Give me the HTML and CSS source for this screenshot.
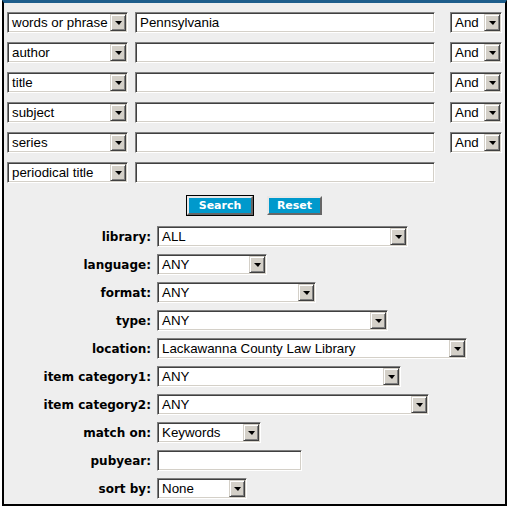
FILE: index.html
```html
<!DOCTYPE html>
<html lang="en">
<head>
    <meta charset="UTF-8">
    <meta name="viewport" content="width=device-width, initial-scale=1.0">
    <title>Advanced Search</title>
    <link rel="stylesheet" href="styles.css">
</head>
<body>
    <div class="search-box">
        <!-- keyword rows -->
        <div class="terms">
            <div class="term-row">
                <div class="select term-field"><span class="value">words or phrase</span><span class="arrow"></span></div>
                <div class="text term-text">Pennsylvania</div>
                <div class="select term-bool"><span class="value">And</span><span class="arrow"></span></div>
            </div>
            <div class="term-row">
                <div class="select term-field"><span class="value">author</span><span class="arrow"></span></div>
                <div class="text term-text"></div>
                <div class="select term-bool"><span class="value">And</span><span class="arrow"></span></div>
            </div>
            <div class="term-row">
                <div class="select term-field"><span class="value">title</span><span class="arrow"></span></div>
                <div class="text term-text"></div>
                <div class="select term-bool"><span class="value">And</span><span class="arrow"></span></div>
            </div>
            <div class="term-row">
                <div class="select term-field"><span class="value">subject</span><span class="arrow"></span></div>
                <div class="text term-text"></div>
                <div class="select term-bool"><span class="value">And</span><span class="arrow"></span></div>
            </div>
            <div class="term-row">
                <div class="select term-field"><span class="value">series</span><span class="arrow"></span></div>
                <div class="text term-text"></div>
                <div class="select term-bool"><span class="value">And</span><span class="arrow"></span></div>
            </div>
            <div class="term-row">
                <div class="select term-field"><span class="value">periodical title</span><span class="arrow"></span></div>
                <div class="text term-text"></div>
            </div>
        </div>

        <div class="buttons">
            <button class="btn btn-default">Search</button>
            <button class="btn">Reset</button>
        </div>

        <!-- limits -->
        <div class="limits">
            <div class="limit-row">
                <label>library:</label>
                <div class="select w-library"><span class="value">ALL</span><span class="arrow"></span></div>
            </div>
            <div class="limit-row">
                <label>language:</label>
                <div class="select w-language"><span class="value">ANY</span><span class="arrow"></span></div>
            </div>
            <div class="limit-row">
                <label>format:</label>
                <div class="select w-format"><span class="value">ANY</span><span class="arrow"></span></div>
            </div>
            <div class="limit-row">
                <label>type:</label>
                <div class="select w-type"><span class="value">ANY</span><span class="arrow"></span></div>
            </div>
            <div class="limit-row">
                <label>location:</label>
                <div class="select w-location"><span class="value">Lackawanna County Law Library</span><span class="arrow"></span></div>
            </div>
            <div class="limit-row">
                <label>item category1:</label>
                <div class="select w-cat1"><span class="value">ANY</span><span class="arrow"></span></div>
            </div>
            <div class="limit-row">
                <label>item category2:</label>
                <div class="select w-cat2"><span class="value">ANY</span><span class="arrow"></span></div>
            </div>
            <div class="limit-row">
                <label>match on:</label>
                <div class="select w-match"><span class="value">Keywords</span><span class="arrow"></span></div>
            </div>
            <div class="limit-row">
                <label>pubyear:</label>
                <div class="text w-pubyear"></div>
            </div>
            <div class="limit-row">
                <label>sort by:</label>
                <div class="select w-sort"><span class="value">None</span><span class="arrow"></span></div>
            </div>
        </div>
    </div>
</body>
</html>
```

FILE: styles.css
```css
body {
    margin: 0;
    font-family: "Liberation Sans", Arial, sans-serif;
    background-color: #fff;
}

.search-box {
    margin-left: 2px;
    width: 501px;
    height: 492px;
    background-color: #eeeeee;
    border: 2px solid #000;
    border-top: 3px solid #1d5d8b;
    padding: 9px 0 0 0;
    box-sizing: content-box;
}

/* windows classic style fields */
.select, .text {
    height: 21px;
    box-sizing: border-box;
    background-color: #fff;
    border-top: 1px solid #808080;
    border-left: 1px solid #808080;
    border-right: 1px solid #fff;
    border-bottom: 1px solid #fff;
    box-shadow: inset 1px 1px 0 #404040, inset -1px -1px 0 #d4d0c8;
    font-size: 13.33px;
    color: #000;
}

.select {
    display: flex;
    align-items: stretch;
    padding: 1px;
}

.select .value {
    flex: 1;
    padding-left: 3px;
    line-height: 17px;
    white-space: nowrap;
    overflow: hidden;
}

.select .arrow {
    width: 16px;
    flex: none;
    box-sizing: border-box;
    background-color: #d4d0c8;
    border-top: 1px solid #d4d0c8;
    border-left: 1px solid #d4d0c8;
    border-right: 1px solid #404040;
    border-bottom: 1px solid #404040;
    box-shadow: inset 1px 1px 0 #fff, inset -1px -1px 0 #808080;
    display: flex;
    align-items: center;
    justify-content: center;
}

.select .arrow::after {
    content: "";
    width: 0;
    height: 0;
    border-left: 4px solid transparent;
    border-right: 3px solid transparent;
    border-top: 4px solid #000;
    margin-top: 1px;
}

.text {
    padding-left: 4px;
    line-height: 19px;
}

.terms {
    display: flex;
    flex-direction: column;
    gap: 9px;
    padding-left: 3px;
}

.term-row {
    display: flex;
    align-items: center;
}

.term-field { width: 121px; margin-right: 7px; }
.term-text { width: 300px; margin-right: 15px; }
.term-bool { width: 52px; }

.buttons {
    display: flex;
    justify-content: center;
    gap: 14px;
    margin-top: 13px;
}

.btn {
    height: 19px;
    padding: 0;
    background-color: #0099cc;
    color: #fff;
    font-family: "DejaVu Sans", Verdana, sans-serif;
    font-weight: bold;
    font-size: 11px;
    border-top: 2px solid #e8e8e8;
    border-left: 2px solid #e8e8e8;
    border-right: 2px solid #666;
    border-bottom: 2px solid #666;
    cursor: pointer;
    width: 55px;
}

.btn-default {
    width: 66px;
    outline: 1px solid #000;
}

.limits {
    display: flex;
    flex-direction: column;
    gap: 7px;
    margin-top: 11px;
}

.limit-row {
    display: flex;
    align-items: center;
}

.limit-row label {
    width: 147px;
    margin-right: 6px;
    text-align: right;
    font-family: "DejaVu Sans", Verdana, sans-serif;
    font-weight: bold;
    font-size: 12px;
    color: #000;
}

.w-library { width: 251px; }
.w-language { width: 110px; }
.w-format { width: 159px; }
.w-type { width: 231px; }
.w-location { width: 310px; }
.w-cat1 { width: 244px; }
.w-cat2 { width: 272px; }
.w-match { width: 104px; }
.w-pubyear { width: 145px; }
.w-sort { width: 90px; }
```
